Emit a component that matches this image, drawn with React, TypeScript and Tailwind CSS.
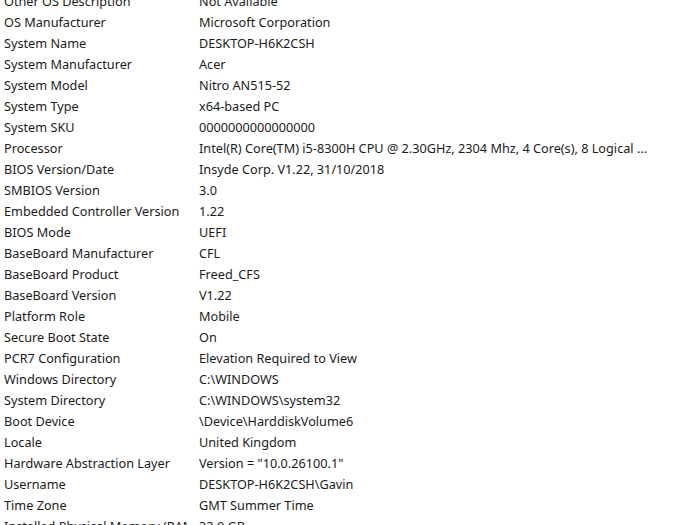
const rows: [string, string][] = [
  ["Other OS Description", "Not Available"],
  ["OS Manufacturer", "Microsoft Corporation"],
  ["System Name", "DESKTOP-H6K2CSH"],
  ["System Manufacturer", "Acer"],
  ["System Model", "Nitro AN515-52"],
  ["System Type", "x64-based PC"],
  ["System SKU", "0000000000000000"],
  ["Processor", "Intel(R) Core(TM) i5-8300H CPU @ 2.30GHz, 2304 Mhz, 4 Core(s), 8 Logical Processor(s)"],
  ["BIOS Version/Date", "Insyde Corp. V1.22, 31/10/2018"],
  ["SMBIOS Version", "3.0"],
  ["Embedded Controller Version", "1.22"],
  ["BIOS Mode", "UEFI"],
  ["BaseBoard Manufacturer", "CFL"],
  ["BaseBoard Product", "Freed_CFS"],
  ["BaseBoard Version", "V1.22"],
  ["Platform Role", "Mobile"],
  ["Secure Boot State", "On"],
  ["PCR7 Configuration", "Elevation Required to View"],
  ["Windows Directory", "C:\\WINDOWS"],
  ["System Directory", "C:\\WINDOWS\\system32"],
  ["Boot Device", "\\Device\\HarddiskVolume6"],
  ["Locale", "United Kingdom"],
  ["Hardware Abstraction Layer", "Version = \"10.0.26100.1\""],
  ["Username", "DESKTOP-H6K2CSH\\Gavin"],
  ["Time Zone", "GMT Summer Time"],
  ["Installed Physical Memory (RAM)", "32.0 GB"],
];

export default function App() {
  return (
    <div className="w-[700px] h-[525px] overflow-hidden bg-white">
      <div className="-mt-[9px] flex flex-col text-[12.7px] text-[#1b1b1b] font-['Noto_Sans',sans-serif]">
        {rows.map(([label, value]) => (
          <div key={label} className="flex h-[21px] items-center leading-[21px]">
            <div className="w-[199px] shrink-0 pl-[4px]">
              <div className="w-[184px] overflow-hidden whitespace-nowrap">{label}</div>
            </div>
            <div className="w-[452px] truncate">{value}</div>
          </div>
        ))}
      </div>
    </div>
  );
}
